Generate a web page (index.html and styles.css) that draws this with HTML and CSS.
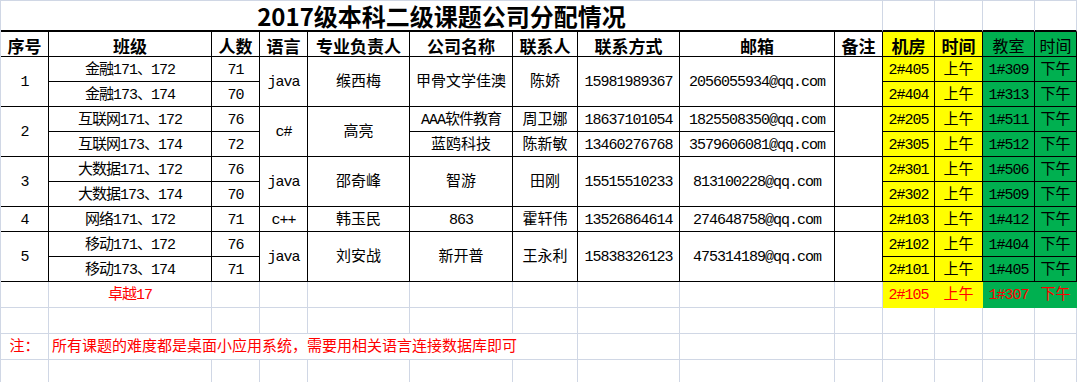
FILE: index.html
```html
<!DOCTYPE html>
<html lang="zh-CN">
<head>
<meta charset="utf-8">
<title>2017级本科二级课题公司分配情况</title>
<link rel="stylesheet" href="styles.css">
</head>
<body>
<div class="sheet">
  <!-- title row -->
  <div class="c title">2017级本科二级课题公司分配情况</div>
  <div class="c tb"></div><div class="c tb"></div><div class="c tb"></div><div class="c tb"></div>

  <!-- header row -->
  <div class="c b h">序号</div>
  <div class="c b h">班级</div>
  <div class="c b h">人数</div>
  <div class="c b h">语言</div>
  <div class="c b h">专业负责人</div>
  <div class="c b h">公司名称</div>
  <div class="c b h">联系人</div>
  <div class="c b h">联系方式</div>
  <div class="c b h">邮箱</div>
  <div class="c b h">备注</div>
  <div class="c b h y">机房</div>
  <div class="c b h y">时间</div>
  <div class="c b hg g">教室</div>
  <div class="c b hg g">时间</div>

  <!-- group 1 -->
  <div class="c b rs">1</div>
  <div class="c b">金融171、172</div>
  <div class="c b">71</div>
  <div class="c b rs">java</div>
  <div class="c b rs cj">缑西梅</div>
  <div class="c b rs cj">甲骨文学佳澳</div>
  <div class="c b rs cj">陈娇</div>
  <div class="c b rs">15981989367</div>
  <div class="c b rs">2056055934@qq.com</div>
  <div class="c b rs"></div>
  <div class="c b y">2#405</div><div class="c b y cj">上午</div><div class="c b g">1#309</div><div class="c b g cj">下午</div>
  <div class="c b">金融173、174</div>
  <div class="c b">70</div>
  <div class="c b y">2#404</div><div class="c b y cj">上午</div><div class="c b g">1#313</div><div class="c b g cj">下午</div>

  <!-- group 2 -->
  <div class="c b rs">2</div>
  <div class="c b">互联网171、172</div>
  <div class="c b">76</div>
  <div class="c b rs">c#</div>
  <div class="c b rs cj">高亮</div>
  <div class="c b">AAA软件教育</div>
  <div class="c b cj">周卫娜</div>
  <div class="c b">18637101054</div>
  <div class="c b">1825508350@qq.com</div>
  <div class="c b rs"></div>
  <div class="c b y">2#205</div><div class="c b y cj">上午</div><div class="c b g">1#511</div><div class="c b g cj">下午</div>
  <div class="c b">互联网173、174</div>
  <div class="c b">72</div>
  <div class="c b cj">蓝鸥科技</div>
  <div class="c b cj">陈新敏</div>
  <div class="c b">13460276768</div>
  <div class="c b">3579606081@qq.com</div>
  <div class="c b y">2#305</div><div class="c b y cj">上午</div><div class="c b g">1#512</div><div class="c b g cj">下午</div>

  <!-- group 3 -->
  <div class="c b rs">3</div>
  <div class="c b">大数据171、172</div>
  <div class="c b">76</div>
  <div class="c b rs">java</div>
  <div class="c b rs cj">邵奇峰</div>
  <div class="c b rs cj">智游</div>
  <div class="c b rs cj">田刚</div>
  <div class="c b rs">15515510233</div>
  <div class="c b rs">813100228@qq.com</div>
  <div class="c b rs"></div>
  <div class="c b y">2#301</div><div class="c b y cj">上午</div><div class="c b g">1#506</div><div class="c b g cj">下午</div>
  <div class="c b">大数据173、174</div>
  <div class="c b">70</div>
  <div class="c b y">2#302</div><div class="c b y cj">上午</div><div class="c b g">1#509</div><div class="c b g cj">下午</div>

  <!-- group 4 -->
  <div class="c b">4</div>
  <div class="c b">网络171、172</div>
  <div class="c b">71</div>
  <div class="c b">c++</div>
  <div class="c b cj">韩玉民</div>
  <div class="c b">863</div>
  <div class="c b cj">霍轩伟</div>
  <div class="c b">13526864614</div>
  <div class="c b">274648758@qq.com</div>
  <div class="c b"></div>
  <div class="c b y">2#103</div><div class="c b y cj">上午</div><div class="c b g">1#412</div><div class="c b g cj">下午</div>

  <!-- group 5 -->
  <div class="c b rs">5</div>
  <div class="c b">移动171、172</div>
  <div class="c b">76</div>
  <div class="c b rs">java</div>
  <div class="c b rs cj">刘安战</div>
  <div class="c b rs cj">新开普</div>
  <div class="c b rs cj">王永利</div>
  <div class="c b rs">15838326123</div>
  <div class="c b rs">475314189@qq.com</div>
  <div class="c b rs"></div>
  <div class="c b y">2#102</div><div class="c b y cj">上午</div><div class="c b g">1#404</div><div class="c b g cj">下午</div>
  <div class="c b">移动173、174</div>
  <div class="c b">71</div>
  <div class="c b y">2#101</div><div class="c b y cj">上午</div><div class="c b g">1#405</div><div class="c b g cj">下午</div>

  <!-- extra row -->
  <div class="c"></div>
  <div class="c red">卓越17</div>
  <div class="c"></div><div class="c"></div><div class="c"></div><div class="c"></div>
  <div class="c"></div><div class="c"></div><div class="c"></div><div class="c"></div>
  <div class="c y fy red">2#105</div><div class="c y fy red cj">上午</div><div class="c g fg red">1#307</div><div class="c g fg red cj">下午</div>

  <!-- empty row -->
  <div class="c"></div><div class="c"></div><div class="c"></div><div class="c"></div><div class="c"></div><div class="c"></div><div class="c"></div>
  <div class="c"></div><div class="c"></div><div class="c"></div><div class="c"></div><div class="c"></div><div class="c"></div><div class="c"></div>

  <!-- note row -->
  <div class="c red cj">注：</div>
  <div class="c red note">所有课题的难度都是桌面小应用系统，需要用相关语言连接数据库即可</div>
  <div class="c"></div><div class="c"></div><div class="c"></div><div class="c"></div><div class="c"></div><div class="c"></div><div class="c"></div>

  <!-- empty row -->
  <div class="c"></div><div class="c"></div><div class="c"></div><div class="c"></div><div class="c"></div><div class="c"></div><div class="c"></div>
  <div class="c"></div><div class="c"></div><div class="c"></div><div class="c"></div><div class="c"></div><div class="c"></div><div class="c"></div>
</div>
</body>
</html>
```

FILE: styles.css
```css
html, body {
  margin: 0;
  padding: 0;
  background: #ffffff;
  overflow: hidden;
}

.sheet {
  display: grid;
  grid-template-columns: 48px 163px 48px 48px 102px 103px 65px 102px 155px 48px 52px 48px 52px 42px;
  grid-template-rows: 31px repeat(10, 25px) repeat(4, 26px);
  width: 1077px;
  box-sizing: border-box;
  border-top: 1px solid #d0d7e5;
  border-left: 1px solid #d0d7e5;
  font-family: "Liberation Mono", "Noto Sans CJK SC", monospace;
  font-size: 15px;
  letter-spacing: -1px;
  color: #000;
}

.c {
  box-sizing: border-box;
  border-right: 1px solid #d0d7e5;
  border-bottom: 1px solid #d0d7e5;
  display: flex;
  align-items: center;
  justify-content: center;
  white-space: nowrap;
  overflow: hidden;
  line-height: 1;
  padding-top: 2px;
}

.cj {
  letter-spacing: 0;
}

.b {
  border-color: #000;
}

.rs {
  grid-row: span 2;
}

.title {
  grid-column: span 10;
  font-family: "Noto Sans CJK SC", sans-serif;
  font-weight: 700;
  font-size: 24px;
  line-height: 28px;
  letter-spacing: 0;
  border-bottom: 2px solid #000;
  padding-top: 1px;
  overflow: visible;
}

.tb {
  border-bottom: 2px solid #000;
}

.h {
  font-family: "Noto Sans CJK SC", sans-serif;
  font-weight: 700;
  font-size: 17px;
  letter-spacing: 0;
}

.hg {
  font-family: "Noto Sans CJK SC", sans-serif;
  font-size: 16px;
  letter-spacing: 0;
}

.y {
  background: #ffff00;
}

.g {
  background: #00b050;
}

.fy {
  border-color: #ffff00;
}

.fg {
  border-color: #00b050;
}

.red {
  color: #ff0000;
}

.note {
  grid-column: span 6;
  justify-content: flex-start;
  padding-left: 3px;
  letter-spacing: 0;
}
```
